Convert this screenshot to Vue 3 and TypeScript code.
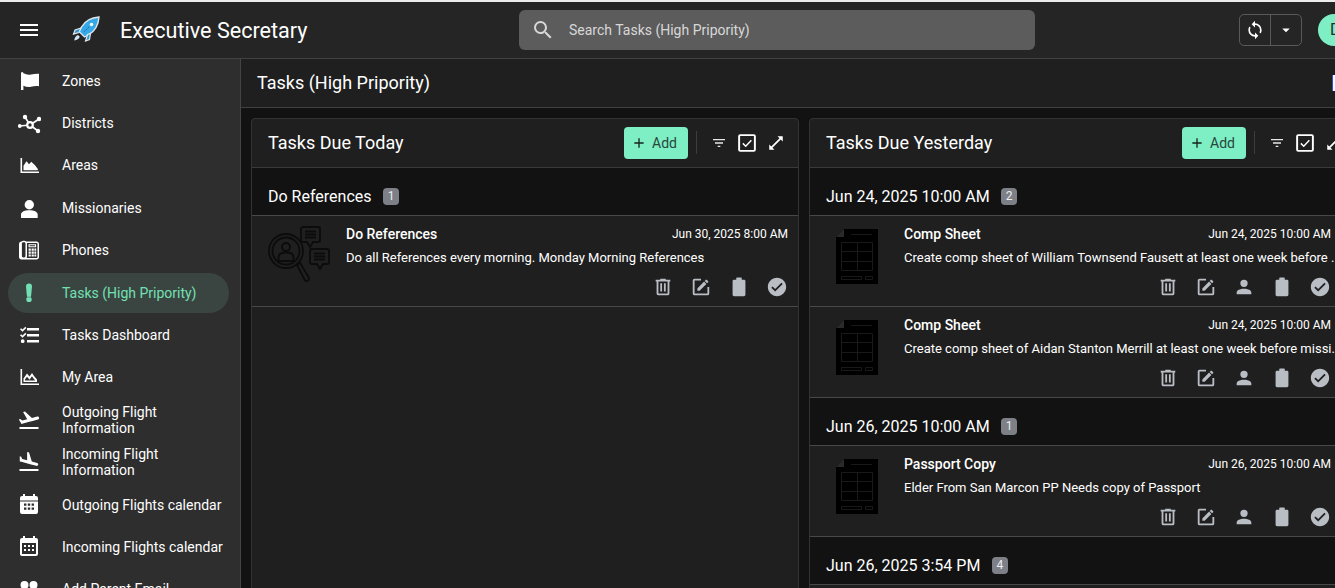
<script setup lang="ts">
interface NavItem {
  label: string
  icon: string
  active?: boolean
}

interface Task {
  title: string
  date: string
  text: string
  art: 'search' | 'sheet'
}

interface TaskGroup {
  name: string
  count: number
  tasks: Task[]
}

interface Column {
  title: string
  inset: boolean
  actions: string[]
  groups: TaskGroup[]
}

const mdi: Record<string, string> = {
  menu: 'M3,6H21V8H3V6M3,11H21V13H3V11M3,16H21V18H3V16Z',
  flag: 'M5 3a1.4 1.4 0 0 1 1.4 1.3C9 5.5 11 6 14 5.5c3-.5 5.5-1 8-.7v12.5c-3-.5-5.500 0-8 .5s-5 .2-7.600-1V21H4V4.500A1.500 1.500 0 0 1 5 3z',
  area: 'M3.500 5h1.600v13.400H22V20H3.500V5zM6.500 17.300v-4.500l3-4.600 2.500 3 2.300-2.400 3.700 3.400 2.800 3.800v1.300H6.500z',
  person: 'M12.300 4a4.700 4.700 0 1 1 0 9.400 4.700 4.700 0 0 1 0-9.400zM12.300 14.300c4.500 0 8.400 1.500 8.400 4.300V22H4v-3.400c0-2.800 3.800-4.300 8.300-4.300z',
  user: 'M12,4A4,4 0 0,1 16,8A4,4 0 0,1 12,12A4,4 0 0,1 8,8A4,4 0 0,1 12,4M12,14C16.42,14 20,15.79 20,18V20H4V18C4,15.79 7.58,14 12,14Z',
  bang: 'M9 5.500a3 3 0 0 1 6 0l-.8 8.700a2.200 2.200 0 0 1-4.400 0L9 5.500zM12 15.700a2.700 2.700 0 1 1 0 5.400 2.700 2.700 0 0 1 0-5.400z',
  checklist: 'M5.500 8.800 3 6.300l1.100-1.100 1.400 1.400L8.300 3.800l1.100 1.100-3.900 3.900zM5.500 14.800 3 12.300l1.100-1.100 1.400 1.400 2.800-2.800 1.100 1.100-3.900 3.900zM5.700 16.300a1.900 1.900 0 1 1 0 3.800 1.900 1.900 0 0 1 0-3.800zM10 5h12v2.400H10V5zM10 11h12v2.400H10V11zM10 17h12v2.400H10V17z',
  areaLine: 'M3.500 4h1.600v14.400H22V20H3.500V4zM6.500 17v-3.500l3.500-5 2.500 3 2.500-3.500 2 3 3 3.500V17H6.500zm1.500-1.500h10.200l-1.900-2.200-1.300-2-2.500 3.400-2.500-3-2 2.800v1z',
  takeoff: 'M2.5,19H21.5V21H2.5V19M22.07,9.64C21.86,8.84 21.03,8.36 20.23,8.58L14.92,10L8,3.57L6.07,4.08L10.21,11.25L5.24,12.58L3.28,11.04L1.83,11.43L3.65,14.59L4.42,15.92L6.02,15.5L11.33,14.07L15.68,12.91L21,11.5C21.81,11.26 22.28,10.44 22.07,9.64Z',
  landing: 'M2.5,19H21.5V21H2.5V19M9.68,13.27L14.03,14.43L19.34,15.85C20.14,16.06 20.96,15.59 21.18,14.79C21.39,14 20.92,13.17 20.12,12.95L14.81,11.53L12.05,2.5L10.12,2V10.28L5.15,8.95L4.22,6.63L2.77,6.24V11.41L4.37,11.84L9.68,13.27Z',
  calFill: 'M6 1h2v2h8V1h2v2h1a2 2 0 0 1 2 2v14a2 2 0 0 1-2 2H5a2 2 0 0 1-2-2V5a2 2 0 0 1 2-2h1V1zM3 7.500v1h18v-1H3zM7 10.500v2.200h2.400v-2.200H7zM10.800 10.500v2.200h2.400v-2.200h-2.400zM14.600 10.500v2.200H17v-2.200h-2.400zM7 14.500v2.200h2.400v-2.200H7zM10.800 14.500v2.200h2.400v-2.200h-2.400zM14.600 14.500v2.200H17v-2.200h-2.400z',
  calLine: 'M9,10V12H7V10H9M13,10V12H11V10H13M17,10V12H15V10H17M19,3A2,2 0 0,1 21,5V19A2,2 0 0,1 19,21H5C3.89,21 3,20.1 3,19V5A2,2 0 0,1 5,3H6V1H8V3H16V1H18V3H19M19,19V8H5V19H19M9,14V16H7V14H9M13,14V16H11V14H13M17,14V16H15V14H17Z',
  people: 'M7.500 4a4 4 0 1 1 0 8 4 4 0 0 1 0-8zM16.500 4a4 4 0 1 1 0 8 4 4 0 0 1 0-8zM7.500 14c3 0 6 1.200 6 3.500V20H1v-2.500C1 15.200 4.500 14 7.500 14zM16.500 14c3 0 6.500 1.200 6.500 3.500V20h-8v-2.500c0-1.400-.6-2.500-1.500-3.200 1-.2 2-.3 3-.3z',
  phone: 'M4.500 3.500C3.100 3.500 2 4.600 2 6v13c0 1.400 1.100 2.500 2.500 2.500h15c1.400 0 2.500-1.100 2.500-2.500V6c0-1.400-1.100-2.500-2.500-2.500H9.200C8.700 3 8 2.700 7.200 2.700h-1c-.6 0-1.200.3-1.700.8zM6.200 4.200h1c.8 0 1.300.6 1.300 1.300v12.600c0 .8-.5 1.400-1.300 1.400h-1c-.8 0-1.300-.6-1.300-1.400V5.500c0-.7.5-1.300 1.300-1.300zM10 5h9.500c.6 0 1 .4 1 1v13c0 .6-.4 1-1 1H9.600c.2-.4.4-.9.4-1.400V5zM11.500 6.200v3h7.600v-3h-7.600zM12.600 7.200h5.400v1h-5.400v-1zM11.600 10.600v2.200h2.200v-2.200h-2.200zM14.600 10.600v2.200h2.200v-2.200h-2.200zM17.400 10.600v2.200h1.800v-2.200h-1.800zM11.600 13.600v2.200h2.200v-2.200h-2.200zM14.600 13.600v2.200h2.200v-2.200h-2.200zM17.400 13.600v2.200h1.800v-2.200h-1.800zM11.600 16.400v2h2.200v-2h-2.200zM14.600 16.400v2h2.200v-2h-2.200zM17.400 16.400v2h1.800v-2h-1.800z',
  search: 'M9.5,3A6.5,6.5 0 0,1 16,9.5C16,11.11 15.41,12.59 14.44,13.73L14.71,14H15.5L20.5,19L19,20.5L14,15.5V14.71L13.73,14.44C12.59,15.41 11.11,16 9.5,16A6.5,6.5 0 0,1 3,9.5A6.5,6.5 0 0,1 9.5,3M9.5,5C7,5 5,7 5,9.5C5,12 7,14 9.5,14C12,14 14,12 14,9.5C14,7 12,5 9.5,5Z',
  sync: 'M12,18A6,6 0 0,1 6,12C6,11 6.25,10.03 6.7,9.2L5.24,7.74C4.46,8.97 4,10.43 4,12A8,8 0 0,0 12,20V23L16,19L12,15M12,4V1L8,5L12,9V6A6,6 0 0,1 18,12C18,13 17.75,13.97 17.3,14.8L18.76,16.26C19.54,15.03 20,13.57 20,12A8,8 0 0,0 12,4Z',
  caret: 'M7,10L12,15L17,10H7Z',
  plus: 'M19,13H13V19H11V13H5V11H11V5H13V11H19V13Z',
  filter: 'M6,13H18V11H6M3,6V8H21V6M10,18H14V16H10V18Z',
  expand: 'M21 3v7l-2.700-2.700-11 11L10 21H3v-7l2.700 2.700 11-11L14 3z',
  trash: 'M9,3V4H4V6H5V19A2,2 0 0,0 7,21H17A2,2 0 0,0 19,19V6H20V4H15V3H9M7,6H17V19H7V6M9,8V17H11V8H9M13,8V17H15V8H13Z',
  edit: 'M5,3C3.89,3 3,3.89 3,5V19A2,2 0 0,0 5,21H19A2,2 0 0,0 21,19V12H19V19H5V5H12V3H5M17.78,4C17.61,4 17.43,4.07 17.3,4.2L16.08,5.41L18.58,7.91L19.8,6.7C20.06,6.44 20.06,6 19.8,5.75L18.25,4.2C18.12,4.07 17.95,4 17.78,4M15.37,6.12L8,13.5V16H10.5L17.87,8.62L15.37,6.12Z',
  clipboard: 'M6.500 4H9V2.500C9 2 9.400 1.500 10 1.500h4c.6 0 1 .5 1 1V4h2.500C18.300 4 19 4.700 19 5.500v15c0 .8-.7 1.500-1.500 1.500h-11C5.700 22 5 21.300 5 20.500v-15C5 4.700 5.700 4 6.500 4z',
  done: 'M12 2C6.500 2 2 6.500 2 12S6.500 22 12 22 22 17.500 22 12 17.500 2 12 2M10 17L5.800 12.800L7.200 11.400L10 14.170L16.800 7.400L18.200 8.800L10 17Z',
}

const navItems: NavItem[] = [
  { label: 'Zones', icon: 'flag' },
  { label: 'Districts', icon: 'hub' },
  { label: 'Areas', icon: 'area' },
  { label: 'Missionaries', icon: 'person' },
  { label: 'Phones', icon: 'phone' },
  { label: 'Tasks (High Pripority)', icon: 'bang', active: true },
  { label: 'Tasks Dashboard', icon: 'checklist' },
  { label: 'My Area', icon: 'areaLine' },
  { label: 'Outgoing Flight Information', icon: 'takeoff' },
  { label: 'Incoming Flight Information', icon: 'landing' },
  { label: 'Outgoing Flights calendar', icon: 'calFill' },
  { label: 'Incoming Flights calendar', icon: 'calLine' },
  { label: 'Add Parent Email', icon: 'people' },
]

const columns: Column[] = [
  {
    title: 'Tasks Due Today',
    inset: false,
    actions: ['trash', 'edit', 'clipboard', 'done'],
    groups: [
      {
        name: 'Do References',
        count: 1,
        tasks: [
          {
            title: 'Do References',
            date: 'Jun 30, 2025 8:00 AM',
            text: 'Do all References every morning. Monday Morning References',
            art: 'search',
          },
        ],
      },
    ],
  },
  {
    title: 'Tasks Due Yesterday',
    inset: true,
    actions: ['trash', 'edit', 'user', 'clipboard', 'done'],
    groups: [
      {
        name: 'Jun 24, 2025 10:00 AM',
        count: 2,
        tasks: [
          {
            title: 'Comp Sheet',
            date: 'Jun 24, 2025 10:00 AM',
            text: 'Create comp sheet of William Townsend Fausett at least one week before ..',
            art: 'sheet',
          },
          {
            title: 'Comp Sheet',
            date: 'Jun 24, 2025 10:00 AM',
            text: 'Create comp sheet of Aidan Stanton Merrill at least one week before missi..',
            art: 'sheet',
          },
        ],
      },
      {
        name: 'Jun 26, 2025 10:00 AM',
        count: 1,
        tasks: [
          {
            title: 'Passport Copy',
            date: 'Jun 26, 2025 10:00 AM',
            text: 'Elder From San Marcon PP Needs copy of Passport',
            art: 'sheet',
          },
        ],
      },
      { name: 'Jun 26, 2025 3:54 PM', count: 4, tasks: [] },
    ],
  },
]
</script>

<template>
  <div class="app">
    <header class="topbar">
      <button class="burger" type="button" aria-label="Menu">
        <svg viewBox="0 0 24 24" class="icon24"><path :d="mdi.menu" /></svg>
      </button>
      <svg class="rocket" viewBox="0 0 32 32" aria-hidden="true">
        <path d="M29 3C22 3.500 15 7 11.500 13L9 17.500l5.500 5.500 4.500-2.500C25 17 28.500 10 29 3z" fill="#35a8e8" stroke="#dfe6ea" stroke-width="1.400" />
        <path d="M11 14 5 16 3.500 20l5.500-1.500zM17.500 20.500 15.500 27l4-1.500 1-6z" fill="#2f9ad8" stroke="#dfe6ea" stroke-width="1.200" />
        <path d="M8 21c-2 .8-3.400 2.600-3.800 5.600 2.800-.4 4.800-1.800 5.600-3.800z" fill="#cfe9f6" />
        <circle cx="21.500" cy="10.500" r="1.800" fill="#f1f6f8" />
        <path d="M19 13l-5 5" stroke="#1b6fa3" stroke-width="1" stroke-dasharray="2 1" />
      </svg>
      <h1 class="brand">Executive Secretary</h1>
      <label class="search">
        <svg viewBox="0 0 24 24" class="icon24"><path :d="mdi.search" /></svg>
        <span>Search Tasks (High Pripority)</span>
      </label>
      <div class="sync-group">
        <button type="button" class="sync-main" aria-label="Sync">
          <svg viewBox="0 0 24 24"><path :d="mdi.sync" /></svg>
        </button>
        <button type="button" class="sync-more" aria-label="More">
          <svg viewBox="0 0 24 24"><path :d="mdi.caret" /></svg>
        </button>
      </div>
      <div class="avatar">D</div>
    </header>

    <div class="body">
      <nav class="sidebar">
        <a v-for="item in navItems" :key="item.label" class="nav-item" :class="{ active: item.active }">
          <svg v-if="item.icon === 'hub'" viewBox="0 0 24 24" class="icon24">
            <path d="M13 14 2.500 15M13 14 8 6M13 14l9-6M13 14l8 6" stroke="currentColor" stroke-width="1.600" fill="none" />
            <circle cx="13" cy="14" r="2.800" fill="#2e2e2e" stroke="currentColor" stroke-width="2.200" />
            <circle cx="2.800" cy="15" r="1.900" />
            <circle cx="8" cy="6" r="2.200" />
            <circle cx="22" cy="8" r="2.200" />
            <circle cx="21" cy="20" r="2.200" />
          </svg>
          <svg v-else viewBox="0 0 24 24" class="icon24"><path :d="mdi[item.icon]" fill-rule="evenodd" /></svg>
          <span>{{ item.label }}</span>
        </a>
      </nav>

      <main class="content">
        <div class="page-title">
          <h2>Tasks (High Pripority)</h2>
          <span class="edge-box"></span>
        </div>

        <div class="board">
          <section v-for="col in columns" :key="col.title" class="column">
            <div class="column-head">
              <h3>{{ col.title }}</h3>
              <button type="button" class="add">
                <svg viewBox="0 0 24 24"><path :d="mdi.plus" /></svg>
                Add
              </button>
              <span class="divider"></span>
              <svg viewBox="0 0 24 24" class="tool filter"><path :d="mdi.filter" /></svg>
              <svg viewBox="0 0 24 24" class="tool check">
                <rect x="1.500" y="1.500" width="21" height="21" rx="1.500" fill="none" stroke="#fff" stroke-width="2.600" />
                <path d="M6.500 12.500l3.800 3.800 7.500-8" fill="none" stroke="#fff" stroke-width="2" />
              </svg>
              <svg viewBox="0 0 24 24" class="tool expand"><path :d="mdi.expand" /></svg>
            </div>

            <template v-for="group in col.groups" :key="group.name">
              <div class="group-head">
                <span>{{ group.name }}</span>
                <em class="badge">{{ group.count }}</em>
              </div>
              <article v-for="(task, i) in group.tasks" :key="i" class="task" :class="{ inset: col.inset }">
                <div class="art">
                  <svg v-if="task.art === 'search'" viewBox="0 0 62 60" class="art-search">
                    <circle cx="18" cy="25" r="17" />
                    <circle cx="18" cy="25" r="13.500" />
                    <circle cx="18" cy="21" r="4" />
                    <path d="M10.500 35v-4c0-3 3-4.500 7.500-4.500s7.500 1.500 7.500 4.500v4z" />
                    <path d="M29 39l3-2.500 9 15.500a2.500 2.500 0 0 1-4 2.500z" />
                    <path d="M35 1h15a2 2 0 0 1 2 2v11a2 2 0 0 1-2 2h-5l-3 5-3-5h-4a2 2 0 0 1-2-2V3a2 2 0 0 1 2-2z" />
                    <path d="M37 5.500h11M37 8.500h11M37 11.500h11" />
                    <path d="M44 23h15a2 2 0 0 1 2 2v11a2 2 0 0 1-2 2h-4l-3 5-3-5h-5a2 2 0 0 1-2-2V25a2 2 0 0 1 2-2z" />
                    <path d="M46 27.500h11M46 30.500h11M46 33.500h11" />
                  </svg>
                  <svg v-else viewBox="0 0 42 55" class="art-sheet">
                    <path d="M8 0h34v55H0V8z" fill="#000" />
                    <path d="M0 8l8-8v8z" fill="#2a2a2a" />
                    <path d="M15 5.500h21M5.500 13.500h31v28h-31zM21.500 13.500v28M5.500 22.500h31M5.500 32.500h31M5.500 47.500h20v3h-20zM29.500 47.500h7v3h-7z" fill="none" stroke="#191919" stroke-width="1" />
                  </svg>
                </div>
                <div class="task-body">
                  <div class="task-top">
                    <strong>{{ task.title }}</strong>
                    <time>{{ task.date }}</time>
                  </div>
                  <p>{{ task.text }}</p>
                  <div class="actions">
                    <svg v-for="a in col.actions" :key="a" viewBox="0 0 24 24"><path :d="mdi[a]" /></svg>
                  </div>
                </div>
              </article>
            </template>
          </section>
        </div>
      </main>
    </div>
  </div>
</template>

<style scoped>
.app {
  display: flex;
  flex-direction: column;
  width: 1335px;
  height: 588px;
  overflow: hidden;
  border-top: 2px solid #ececec;
  box-sizing: border-box;
  background: #121212;
  color: #fff;
  font-family: Roboto, 'Liberation Sans', sans-serif;
}

svg {
  fill: currentColor;
  flex: none;
}

.icon24 {
  width: 24px;
  height: 24px;
}

.topbar {
  display: flex;
  align-items: center;
  flex: none;
  height: 56px;
  padding-left: 17px;
  background: #252525;
  border-bottom: 1px solid #414141;
}

.topbar > * {
  flex: none;
}

.burger {
  display: flex;
  width: 24px;
  height: 24px;
  padding: 0;
  border: 0;
  background: none;
  color: #fff;
}

.rocket {
  width: 32px;
  height: 32px;
  margin-left: 29px;
}

.brand {
  width: 399px;
  margin: 0 0 0 18px;
  font-size: 21.6px;
  font-weight: 400;
}

.search {
  display: flex;
  align-items: center;
  gap: 14px;
  width: 516px;
  height: 40px;
  padding-left: 12px;
  box-sizing: border-box;
  border-radius: 6px;
  background: #5c5c5c;
  color: #d8d8d8;
  font-size: 14px;
}

.sync-group {
  display: flex;
  height: 32px;
  margin-left: 204px;
  border: 1px solid #595959;
  border-radius: 5px;
  box-sizing: border-box;
}

.sync-group button {
  display: flex;
  align-items: center;
  justify-content: center;
  height: 100%;
  padding: 0;
  border: 0;
  background: none;
  color: #fff;
}

.sync-group .sync-main {
  width: 31px;
  border-right: 1px solid #595959;
}

.sync-main svg {
  width: 20px;
  height: 20px;
}

.sync-more {
  width: 30px;
}

.sync-more svg {
  width: 18px;
  height: 18px;
}

.avatar {
  width: 32px;
  height: 32px;
  margin-left: 16px;
  padding-left: 12px;
  box-sizing: border-box;
  border-radius: 50%;
  background: #7eeec4;
  color: #17362b;
  font-size: 16px;
  line-height: 32px;
}

.body {
  display: flex;
  flex: 1;
  min-height: 0;
}

.sidebar {
  display: flex;
  flex-direction: column;
  flex: none;
  gap: 2.4px;
  width: 241px;
  padding: 1.6px 11px 0 8px;
  box-sizing: border-box;
  overflow: hidden;
  background: #2e2e2e;
  border-right: 1px solid #444;
}

.nav-item {
  display: flex;
  align-items: center;
  flex: none;
  gap: 21px;
  height: 40px;
  padding-left: 9px;
  border-radius: 20px;
  color: #fff;
  font-size: 14px;
  line-height: 16px;
}

.nav-item.active {
  background: #3a4541;
  color: #72e0b5;
}

.content {
  flex: 1;
  min-width: 0;
  overflow: hidden;
}

.page-title {
  display: flex;
  align-items: center;
  justify-content: space-between;
  height: 47px;
  padding: 0 0 1px 16px;
  background: #1f1f1f;
  border-bottom: 1px solid #414141;
}

.page-title h2 {
  margin: 0;
  font-size: 18px;
  font-weight: 400;
}

.edge-box {
  width: 2px;
  height: 16px;
  background: #f4f6ff;
  border-left: 1px solid #3550c8;
}

.board {
  display: flex;
  gap: 10px;
  padding: 10px;
}

.column {
  flex: 0 0 548px;
  min-width: 0;
  min-height: 600px;
  box-sizing: border-box;
  background: #1f1f1f;
  border: 1px solid #333;
  border-radius: 4px 4px 0 0;
}

.column-head {
  display: flex;
  align-items: center;
  height: 47px;
  padding: 0 0 1px 16px;
  border-bottom: 1px solid #3a3a3a;
}

.column-head h3 {
  width: 356px;
  margin: 0;
  font-size: 18px;
  font-weight: 400;
}

.add {
  display: flex;
  align-items: center;
  gap: 5px;
  width: 64px;
  height: 32px;
  padding: 0 0 0 7px;
  border: 0;
  border-radius: 4px;
  background: #7eeec4;
  color: #27473b;
  font-family: inherit;
  font-size: 14px;
}

.add svg {
  width: 16px;
  height: 16px;
  color: #15251f;
}

.divider {
  width: 1px;
  height: 23px;
  margin: 0 14px 0 8px;
  background: #3d3d3d;
}

.tool.filter {
  width: 16px;
  height: 16px;
  color: #e8e8e8;
}

.tool.check {
  width: 18px;
  height: 18px;
  margin-left: 11px;
}

.tool.expand {
  width: 18px;
  height: 18px;
  margin-left: 11px;
}

.group-head {
  display: flex;
  align-items: center;
  gap: 11.5px;
  height: 38px;
  padding: 9px 16px 0;
  background: #121212;
  border-bottom: 1px solid #484848;
  font-size: 16px;
}

.badge {
  width: 16px;
  border-radius: 4px;
  background: #7d8087;
  color: #eceef0;
  font-size: 12px;
  font-style: normal;
  line-height: 17px;
  text-align: center;
}

.task {
  display: flex;
  gap: 16px;
  height: 80px;
  padding: 10px 10px 0 16px;
  background: #1f1f1f;
  border-bottom: 1px solid #484848;
}

.task.inset {
  padding-right: 25px;
}

.art {
  display: flex;
  justify-content: center;
  flex: none;
  width: 62px;
}

.art-search {
  width: 62px;
  height: 60px;
  fill: none;
  stroke: #0c0c0c;
  stroke-width: 1.8;
}

.art-sheet {
  width: 42px;
  height: 55px;
  margin-top: 3px;
}

.task-body {
  flex: 1;
  min-width: 0;
}

.task-top {
  display: flex;
  align-items: center;
  justify-content: space-between;
  height: 16px;
}

.task-top strong {
  font-size: 14px;
  font-weight: 500;
}

.task-top time {
  font-size: 12px;
}

.task p {
  margin: 7.5px 0 0;
  font-size: 13px;
  line-height: 16px;
  white-space: nowrap;
}

.actions {
  display: flex;
  justify-content: flex-end;
  gap: 16px;
  margin-top: 10px;
  color: #b9bdc4;
}

.actions svg {
  width: 22px;
  height: 22px;
}
</style>
